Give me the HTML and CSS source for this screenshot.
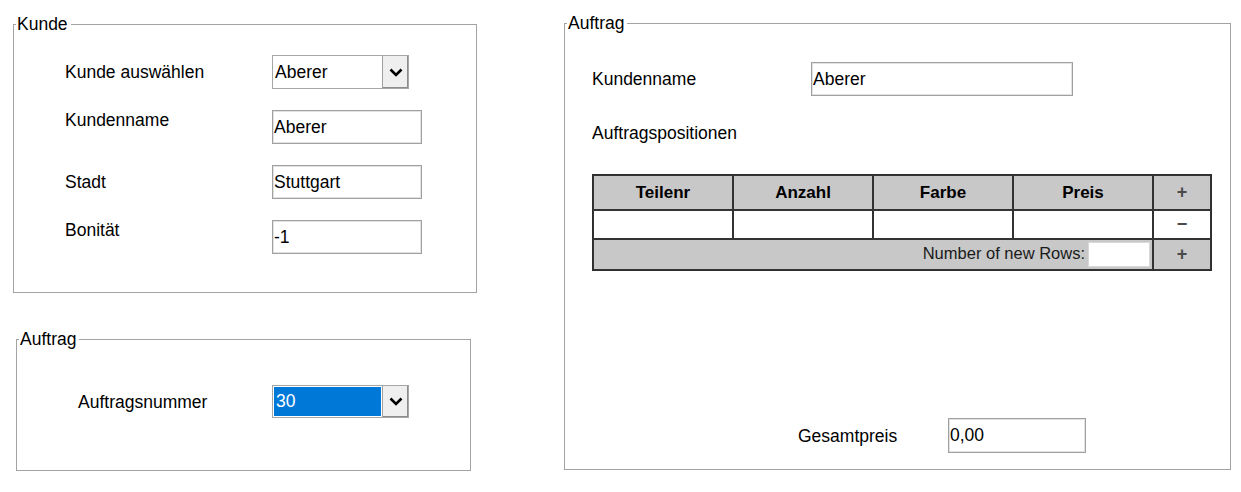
FILE: index.html
```html
<!DOCTYPE html>
<html>
<head>
	<meta charset="utf-8">
	<title>Auftragserfassung</title>
	<link rel="stylesheet" href="styles.css">
</head>
<body>
	<div class="page">
		<div class="left">
			<fieldset class="box kunde">
				<legend>Kunde</legend>
				<div class="form">
					<label class="mid">Kunde auswählen</label>
					<div class="combo">
						<span class="combo-value">Aberer</span>
						<span class="combo-btn">
							<svg width="14" height="9" viewBox="0 0 14 9"><path d="M1.5 1.5 7 7 12.5 1.5" fill="none" stroke="#000" stroke-width="2.6"/></svg>
						</span>
					</div>
					<label>Kundenname</label>
					<input type="text" value="Aberer">
					<label class="mid">Stadt</label>
					<input type="text" value="Stuttgart">
					<label>Bonität</label>
					<input type="text" value="-1">
				</div>
			</fieldset>
			<fieldset class="box auftrag-nr">
				<legend>Auftrag</legend>
				<div class="form-nr">
					<label class="mid">Auftragsnummer</label>
					<div class="combo">
						<span class="combo-value selected">30</span>
						<span class="combo-btn">
							<svg width="14" height="9" viewBox="0 0 14 9"><path d="M1.5 1.5 7 7 12.5 1.5" fill="none" stroke="#000" stroke-width="2.6"/></svg>
						</span>
					</div>
				</div>
			</fieldset>
		</div>
		<fieldset class="box auftrag">
			<legend>Auftrag</legend>
			<div class="order">
				<div class="order-row">
					<label class="mid">Kundenname</label>
					<input type="text" class="wide" value="Aberer">
				</div>
				<div class="subtitle">Auftragspositionen</div>
				<table class="positions">
					<tr class="head">
						<th>Teilenr</th>
						<th>Anzahl</th>
						<th>Farbe</th>
						<th>Preis</th>
						<th class="act">+</th>
					</tr>
					<tr class="item">
						<td></td>
						<td></td>
						<td></td>
						<td></td>
						<td class="act">&minus;</td>
					</tr>
					<tr class="foot">
						<td colspan="4" class="newrows">Number of new Rows:<input type="text" class="count"></td>
						<td class="act">+</td>
					</tr>
				</table>
				<div class="total-row">
					<label class="mid">Gesamtpreis</label>
					<input type="text" class="total" value="0,00">
				</div>
			</div>
		</fieldset>
	</div>
</body>
</html>
```

FILE: styles.css
```css
body{
	margin: 0;
	font-family: "Liberation Sans", Arial, sans-serif;
	font-size: 17.5px;
	color: #000;
	background: #fff;
}
.page{
	display: flex;
	align-items: flex-start;
	padding: 14px 0 0 13px;
}
.box{
	box-sizing: border-box;
	margin: 0;
	padding: 0;
	border: 1px solid #a3a3a3;
	min-width: 0;
}
.box legend{
	margin-left: 2px;
	padding: 0 3px 0 1px;
	font-size: 17.5px;
	line-height: 20px;
}
label{
	line-height: 20px;
}
label.mid{
	align-self: center;
}
input{
	box-sizing: border-box;
	width: 150px;
	height: 34px;
	margin: 0;
	padding: 0 1px;
	border: 1px solid #a0a0a0;
	box-shadow: inset 0 0 0 1px #e2e2e2;
	font-family: inherit;
	font-size: 17.5px;
	color: #000;
	outline: none;
}

/* Kunde */
.kunde{
	width: 464px;
}
.form{
	display: grid;
	grid-template-columns: 207px 150px;
	grid-auto-rows: 34px;
	row-gap: 21px;
	align-items: start;
	padding: 21px 0 38px 51px;
}
.combo{
	box-sizing: border-box;
	display: flex;
	width: 137px;
	height: 34px;
	border: 1px solid #a6a6a6;
	background: #fff;
}
.combo-value{
	flex: 1;
	display: flex;
	align-items: center;
	padding: 0 2px;
}
.combo-value.selected{
	margin: 1px;
	background: #0078d7;
	color: #fff;
}
.combo-btn{
	display: flex;
	align-items: center;
	justify-content: center;
	width: 25px;
	background: #efefef;
	border-left: 1px solid #a0a0a0;
	box-shadow: inset -1px -1px 0 #8c8c8c;
}

/* Auftrag links */
.auftrag-nr{
	width: 455px;
	margin: 36px 0 0 3px;
}
.form-nr{
	display: grid;
	grid-template-columns: 194px 137px;
	grid-auto-rows: 33px;
	padding: 36px 0 52px 61px;
}
.form-nr .combo{
	height: 33px;
}

/* Auftrag rechts */
.auftrag{
	width: 667px;
	margin: -1px 0 0 87px;
}
.order{
	padding: 29px 0 16px 27px;
}
.order-row{
	display: grid;
	grid-template-columns: 219px 262px;
	height: 34px;
}
.wide{
	width: 262px;
}
.subtitle{
	margin-top: 27px;
	line-height: 20px;
}
.positions{
	box-sizing: border-box;
	width: 620px;
	margin-top: 31px;
	table-layout: fixed;
	border-collapse: separate;
	border-spacing: 0;
	border: 1px solid #2e2e2e;
}
.positions th,
.positions td{
	box-sizing: border-box;
	width: 140px;
	padding: 0;
	border: 1px solid #333;
	text-align: center;
}
.positions .act{
	width: 58px;
	font-weight: bold;
	font-size: 18px;
	color: #4a4a4a;
}
.positions .head th{
	height: 35px;
	background: #c8c8c8;
	font-size: 17px;
}
.positions .head .act{
	font-size: 18px;
}
.positions .item td{
	height: 29px;
	background: #fff;
}
.positions .foot td{
	height: 31px;
	background: #c8c8c8;
}
.positions .newrows{
	text-align: right;
	padding-right: 2px;
	font-size: 16.5px;
	color: #1a1a1a;
}
.count{
	width: 62px;
	height: 25px;
	margin-left: 3px;
	vertical-align: middle;
	border: 1px solid #d8d8d8;
	box-shadow: none;
	background: #fff;
}
.total-row{
	display: grid;
	grid-template-columns: 150px 138px;
	height: 35px;
	margin-top: 147px;
	padding-left: 206px;
}
.total{
	width: 138px;
	height: 35px;
}
```
